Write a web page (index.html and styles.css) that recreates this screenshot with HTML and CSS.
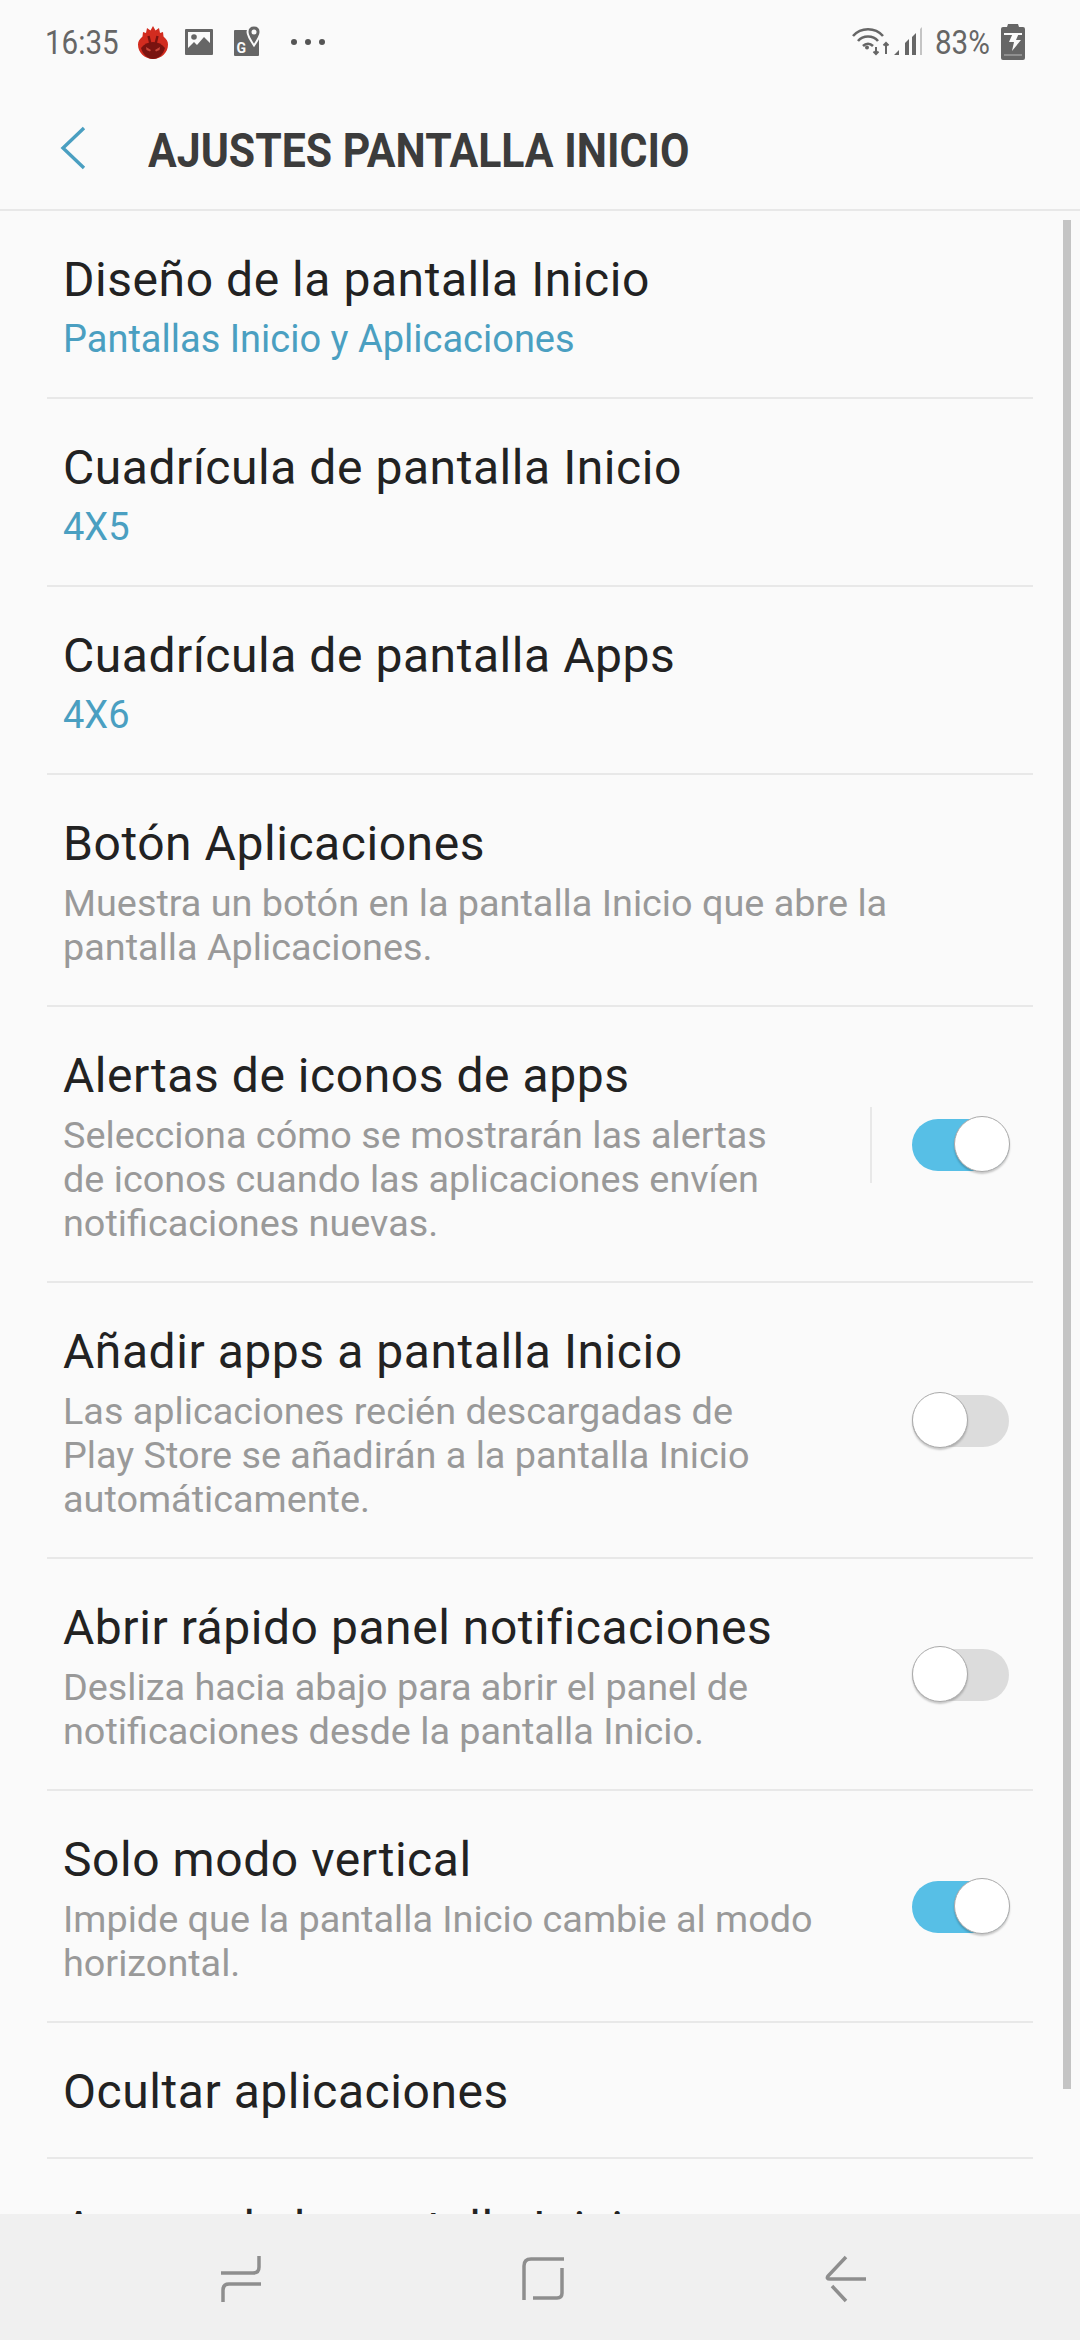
FILE: index.html
```html
<!DOCTYPE html>
<html lang="es">
<head>
    <meta charset="UTF-8">
    <meta name="viewport" content="width=device-width, initial-scale=1.0">
    <title>Ajustes pantalla Inicio</title>
    <link rel="stylesheet" href="styles.css">
</head>
<body>
    <div class="status-bar">
        <div class="status-left">
            <span class="clock">16:35</span>
            <svg class="icon-flame" width="30" height="33" viewBox="0 0 30 33">
                <path fill="#d22c1f" d="M15 0l2.500 4.500L21 2l1 5 3-1 .5 4.500C28.500 13 30 15.500 30 18.500 30 26.500 23.500 33 15 33S0 26.500 0 18.500C0 15.500 1.500 13 4.500 10.500L5 6l3 1 1-5 3.500 2.500z"/>
                <path fill="#7a1310" d="M3 22c3-4 7-6 12-6s9 2 12 6c-2 7-7 11-12 11S5 29 3 22z"/>
                <path fill="none" stroke="#7a1310" stroke-width="2.400" d="M10.500 10l2 8M19.500 10l-2 8"/>
                <path fill="#c9463a" d="M8 21l5 3-1 1.500-3.500-1.500zM22 21l-5 3 1 1.500 3.500-1.500z"/>
            </svg>
            <svg class="icon-image" width="28" height="26" viewBox="0 0 28 26">
                <path fill="#666" fill-rule="evenodd" d="M1 0h26a1 1 0 0 1 1 1v24a1 1 0 0 1-1 1H1a1 1 0 0 1-1-1V1a1 1 0 0 1 1-1zm2 3v16l6-6 3 3 7-8 6 6V3z"/>
                <circle cx="9" cy="8" r="2.800" fill="#666"/>
            </svg>
            <svg class="icon-maps" width="27" height="30" viewBox="0 0 27 30">
                <rect x="0" y="4" width="25" height="26" rx="1" fill="#666"/>
                <path fill="#666" stroke="#fafafa" stroke-width="2" d="M20 -.500c3.800 0 6.500 2.800 6.500 6.500 0 3.500-3.500 9-6.500 13.500-3-4.500-6.500-10-6.500-13.500 0-3.700 2.700-6.500 6.500-6.500z"/>
                <circle cx="20" cy="6" r="2.500" fill="#fafafa"/>
                <text class="maps-g" x="2.500" y="27">G</text>
            </svg>
            <span class="more-dots"><i></i><i></i><i></i></span>
        </div>
        <div class="status-right">
            <svg class="icon-wifi" width="38" height="30" viewBox="0 0 38 30">
                <path fill="none" stroke="#666" stroke-width="2.600" d="M1 9C9 0 23 0 31 9M6 14c5-6 15-6 20 0M11 19c3-3 7-3 10 0"/>
                <circle cx="15" cy="20.500" r="2" fill="#666"/>
                <path fill="none" stroke="#666" stroke-width="2" d="M24 20v7M21.500 24.500L24 27l2.500-2.500M34 27V16M31.500 18.500L34 16l2.500 2.500"/>
            </svg>
            <svg class="icon-signal" width="30" height="30" viewBox="0 0 30 30">
                <path fill="#666" d="M0 28l5-5v5zM11 28V16l4-4v16zM18 28V10l4-4v22z"/>
                <path fill="#c4c4c4" d="M26 28V2l2-2v28z"/>
            </svg>
            <span class="battery-text">83%</span>
            <svg class="icon-battery" width="24" height="36" viewBox="0 0 24 36">
                <path fill="#666" d="M7 0h10l1 3h4a2 2 0 0 1 2 2v29a2 2 0 0 1-2 2H2a2 2 0 0 1-2-2V5a2 2 0 0 1 2-2h4z"/>
                <path fill="#fafafa" d="M3 9h18v2H3zM12 9h6l-3 7h5l-9 11 2-9H8z"/>
                <path fill="#8f8f8f" d="M3 30h18v2H3z"/>
            </svg>
        </div>
    </div>

    <div class="app-bar">
        <svg class="back" width="26" height="44" viewBox="0 0 26 44">
            <path fill="none" stroke="#4a9fc1" stroke-width="3.400" d="M24 2L3 22l21 20"/>
        </svg>
        <h1>AJUSTES PANTALLA INICIO</h1>
    </div>

    <div class="settings">
        <div class="item h188">
            <div class="item-text">
                <div class="title">Diseño de la pantalla Inicio</div>
                <div class="value">Pantallas Inicio y Aplicaciones</div>
            </div>
        </div>
        <div class="item h188">
            <div class="item-text">
                <div class="title">Cuadrícula de pantalla Inicio</div>
                <div class="value">4X5</div>
            </div>
        </div>
        <div class="item h188">
            <div class="item-text">
                <div class="title">Cuadrícula de pantalla Apps</div>
                <div class="value">4X6</div>
            </div>
        </div>
        <div class="item h232">
            <div class="item-text">
                <div class="title">Botón Aplicaciones</div>
                <div class="desc">Muestra un botón en la pantalla Inicio que abre la<br>pantalla Aplicaciones.</div>
            </div>
        </div>
        <div class="item h276">
            <div class="item-text">
                <div class="title">Alertas de iconos de apps</div>
                <div class="desc">Selecciona cómo se mostrarán las alertas<br>de iconos cuando las aplicaciones envíen<br>notificaciones nuevas.</div>
            </div>
            <div class="vline"></div>
            <div class="switch on"><span class="knob"></span></div>
        </div>
        <div class="item h276">
            <div class="item-text">
                <div class="title">Añadir apps a pantalla Inicio</div>
                <div class="desc">Las aplicaciones recién descargadas de<br>Play Store se añadirán a la pantalla Inicio<br>automáticamente.</div>
            </div>
            <div class="switch"><span class="knob"></span></div>
        </div>
        <div class="item h232">
            <div class="item-text">
                <div class="title">Abrir rápido panel notificaciones</div>
                <div class="desc">Desliza hacia abajo para abrir el panel de<br>notificaciones desde la pantalla Inicio.</div>
            </div>
            <div class="switch"><span class="knob"></span></div>
        </div>
        <div class="item h232">
            <div class="item-text">
                <div class="title">Solo modo vertical</div>
                <div class="desc">Impide que la pantalla Inicio cambie al modo<br>horizontal.</div>
            </div>
            <div class="switch on"><span class="knob"></span></div>
        </div>
        <div class="item h136">
            <div class="item-text">
                <div class="title">Ocultar aplicaciones</div>
            </div>
        </div>
        <div class="item last">
            <div class="item-text">
                <div class="title">Acerca de la pantalla Inicio</div>
            </div>
        </div>
        <div class="scrollbar"></div>
    </div>

    <div class="nav-bar">
        <svg class="nav-recent" width="44" height="48" viewBox="0 0 44 48">
            <path d="M1 18H33q6 0 6-6V1M41 29H9q-6 0-6 6V47"/>
        </svg>
        <svg class="nav-home" width="44" height="48" viewBox="0 0 44 48">
            <path d="M43 4H10q-7 0-7 7V45M41 13V38q0 5-5 5H12"/>
        </svg>
        <svg class="nav-back" width="44" height="48" viewBox="0 0 44 48">
            <path d="M21 2L3 21q-2 3 2 3H41M7 31L21 46"/>
        </svg>
    </div>
</body>
</html>
```
FILE: styles.css
```css
body {
    font-family: Roboto, sans-serif;
    background-color: #fafafa;
    margin: 0;
    padding: 0;
    width: 1080px;
    height: 2340px;
    overflow: hidden;
    display: flex;
    flex-direction: column;
}
.status-bar {
    height: 84px;
    padding: 0 55px 0 45px;
    display: flex;
    justify-content: space-between;
    align-items: center;
    color: #666;
    flex-shrink: 0;
}
.status-left, .status-right {
    display: flex;
    align-items: center;
}
.clock, .battery-text {
    font-size: 34px;
    display: inline-block;
    transform: scaleX(0.87);
    transform-origin: left center;
}
.clock {
    width: 76px;
    margin-right: 17px;
}
.icon-image {
    margin-left: 17px;
}
.icon-maps {
    margin-left: 21px;
    margin-bottom: 3px;
}
.maps-g {
    font-family: Roboto, sans-serif;
    font-size: 14px;
    font-weight: 700;
    fill: #fafafa;
}
.more-dots {
    display: flex;
    gap: 8px;
    margin-left: 30px;
}
.more-dots i {
    width: 6px;
    height: 6px;
    border-radius: 50%;
    background-color: #555;
}
.icon-signal {
    margin-left: 4px;
}
.battery-text {
    width: 54px;
    margin: 0 12px 0 11px;
}
.app-bar {
    height: 117px;
    padding: 8px 0 0 60px;
    display: flex;
    align-items: center;
    border-bottom: 2px solid #e8e8e8;
    flex-shrink: 0;
}
.back {
    margin-top: -6px;
}
.app-bar h1 {
    margin: 0 0 0 62px;
    font-size: 49px;
    font-weight: 700;
    color: #3c3c3c;
    transform: scaleX(0.873);
    transform-origin: left center;
    white-space: nowrap;
}
.settings {
    flex: 1;
    overflow: hidden;
    padding: 0 47px;
    position: relative;
}
.item {
    display: flex;
    align-items: center;
    padding-left: 16px;
    padding-right: 24px;
    border-bottom: 2px solid #e8e8e8;
    box-sizing: border-box;
}
.h188 { height: 188px; }
.h232 { height: 232px; }
.h276 { height: 276px; }
.h136 { height: 136px; }
.item.last { border-bottom: none; height: 136px; }
.item-text {
    flex: 1;
    padding-top: 4px;
}
.title {
    font-size: 48px;
    letter-spacing: 0.55px;
    line-height: 58px;
    color: #222;
}
.value {
    font-size: 38px;
    line-height: 44px;
    color: #4a9fc1;
    margin-top: 8px;
}
.desc {
    font-size: 37.8px;
    line-height: 44px;
    color: #999;
    margin-top: 8px;
}
.vline {
    width: 2px;
    height: 76px;
    margin-top: 2px;
    background-color: #e8e8e8;
    margin-right: 40px;
}
.switch {
    width: 97px;
    height: 52px;
    margin-top: 2px;
    border-radius: 26px;
    background-color: #dcdcdc;
    position: relative;
}
.switch.on {
    background-color: #57bfe6;
}
.knob {
    position: absolute;
    top: -3px;
    left: 0;
    width: 54px;
    height: 54px;
    border-radius: 50%;
    background-color: #fff;
    border: 1px solid #aaa;
    box-shadow: 0 2px 2px rgba(0, 0, 0, 0.2);
}
.switch.on .knob {
    left: 42px;
}
.scrollbar {
    position: absolute;
    top: 9px;
    right: 9px;
    width: 8px;
    height: 1869px;
    background-color: #c4c4c4;
}
.nav-bar {
    height: 122px;
    padding: 4px 0 0 220px;
    background-color: #f0f0f0;
    display: flex;
    align-items: center;
    flex-shrink: 0;
}
.nav-bar svg {
    fill: none;
    stroke: #8e8e8e;
    stroke-width: 3.500;
}
.nav-home {
    margin-left: 257px;
}
.nav-back {
    margin-left: 260px;
}
```
